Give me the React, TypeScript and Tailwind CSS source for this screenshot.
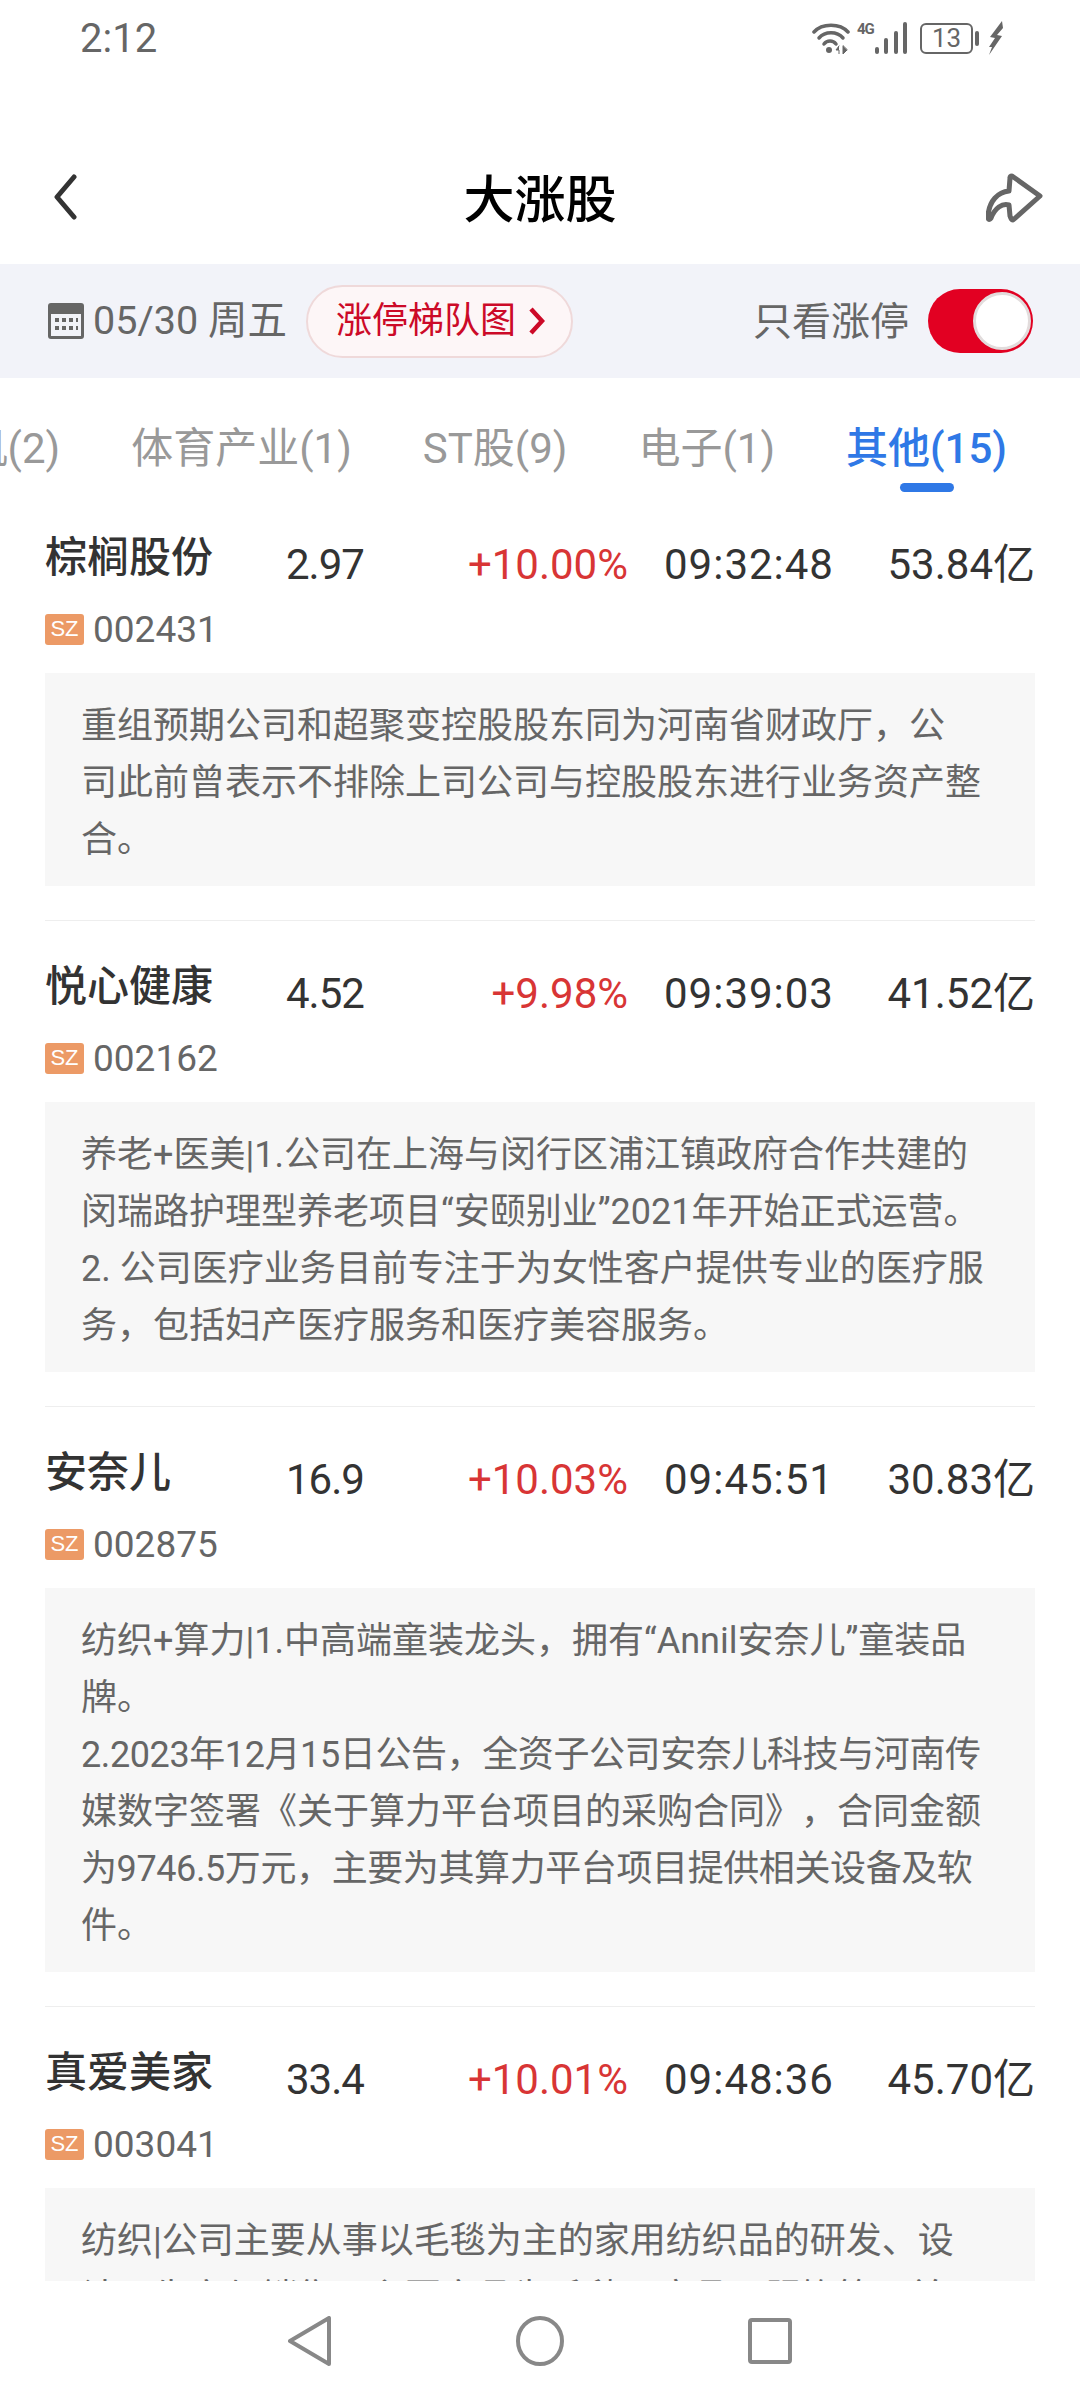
import type { FC } from "react";

const cjk = "font-['Roboto','Noto_Sans_CJK_SC',sans-serif]";

interface Stock {
  name: string;
  price: string;
  change: string;
  time: string;
  cap: string;
  code: string;
  lines: string[];
}

const stocks: Stock[] = [
  {
    name: "棕榈股份",
    price: "2.97",
    change: "+10.00%",
    time: "09:32:48",
    cap: "53.84亿",
    code: "002431",
    lines: [
      "重组预期公司和超聚变控股股东同为河南省财政厅，公",
      "司此前曾表示不排除上司公司与控股股东进行业务资产整",
      "合。",
    ],
  },
  {
    name: "悦心健康",
    price: "4.52",
    change: "+9.98%",
    time: "09:39:03",
    cap: "41.52亿",
    code: "002162",
    lines: [
      "养老+医美|1.公司在上海与闵行区浦江镇政府合作共建的",
      "闵瑞路护理型养老项目“安颐别业”2021年开始正式运营。",
      "2. 公司医疗业务目前专注于为女性客户提供专业的医疗服",
      "务，包括妇产医疗服务和医疗美容服务。",
    ],
  },
  {
    name: "安奈儿",
    price: "16.9",
    change: "+10.03%",
    time: "09:45:51",
    cap: "30.83亿",
    code: "002875",
    lines: [
      "纺织+算力|1.中高端童装龙头，拥有“Annil安奈儿”童装品",
      "牌。",
      "2.2023年12月15日公告，全资子公司安奈儿科技与河南传",
      "媒数字签署《关于算力平台项目的采购合同》，合同金额",
      "为9746.5万元，主要为其算力平台项目提供相关设备及软",
      "件。",
    ],
  },
  {
    name: "真爱美家",
    price: "33.4",
    change: "+10.01%",
    time: "09:48:36",
    cap: "45.70亿",
    code: "003041",
    lines: [
      "纺织|公司主要从事以毛毯为主的家用纺织品的研发、设",
      "计、生产与销售，主要产品为毛毯、床品、服饰等，并",
    ],
  },
];

const tabs = ["无人机(2)", "体育产业(1)", "ST股(9)", "电子(1)"];

const StatusBar: FC = () => (
  <div className="flex h-[76px] shrink-0 items-center justify-between pl-[80px] pr-[77px] text-[#666]">
    <span className="mt-[2px] text-[40px] leading-none">2:12</span>
    <div className="flex items-center">
      <svg width="38" height="32" viewBox="0 0 38 32" fill="none" stroke="#666" strokeWidth="3.5" strokeLinecap="round">
        <path d="M2 10C10 1 28 1 36 10" />
        <path d="M7 16C13 9 25 9 31 16" />
        <path d="M12 22C15 18 21 18 24 22" />
        <circle cx="17" cy="28" r="3" fill="#666" stroke="none" />
        <path d="M27 24L24 28H27V32M31 24V32L35 28Z" fill="#666" strokeWidth="1" />
      </svg>
      <div className="ml-[7px] flex h-[32px] items-end">
        <span className="mb-auto w-[18px] text-[15px] font-bold leading-[14px] tracking-[-1px]">4G</span>
        <svg width="32" height="32" viewBox="0 0 32 32" fill="#666">
          <rect x="0" y="25" width="4" height="7" rx="2" />
          <rect x="9" y="16" width="4" height="16" rx="2" />
          <rect x="19" y="9" width="4" height="23" rx="2" />
          <rect x="28" y="0" width="4" height="32" rx="2" />
        </svg>
      </div>
      <div className="ml-[13px] flex h-[31px] w-[53px] items-center justify-center rounded-[6px] border-[2px] border-[#666] text-[26px] leading-none">
        13
      </div>
      <div className="ml-[2px] h-[15px] w-[4px] rounded-[2px] bg-[#666]" />
      <svg className="ml-[9px]" width="15" height="34" viewBox="0 0 15 34" fill="#666">
        <path d="M14 0L2 16L7 17L1 26L4 26L1 34L14 15L9 14L15 7Z" />
      </svg>
    </div>
  </div>
);

const Header: FC = () => (
  <div className="flex h-[188px] shrink-0 items-center justify-between pl-[53px] pr-[37px] pt-[56px]">
    <div className="mb-[2px] w-[41px]">
      <svg width="24" height="46" viewBox="0 0 24 46" fill="none" stroke="#333" strokeWidth="5" strokeLinecap="round" strokeLinejoin="round">
        <path d="M21 3L4 23L21 43" />
      </svg>
    </div>
    <h1 className={`mt-[6px] text-[51px] font-medium leading-[64px] text-black ${cjk}`}>大涨股</h1>
    <svg width="57" height="50" viewBox="0 0 57 50" fill="none" stroke="#666" strokeWidth="5" strokeLinejoin="round" strokeLinecap="round">
      <path d="M26 3L54 23L27 47C25 47 25 45 24 43L23 32C16 30 9 35 5 45C3 48 2 46 2 43C3 28 12 19 23 18L24 5C24 3 25 3 26 3Z" />
    </svg>
  </div>
);

const FilterBar: FC = () => (
  <div className="flex h-[114px] shrink-0 items-center justify-between bg-[#f2f3f9] pl-[48px] pr-[47px]">
    <div className="flex items-center">
      <svg width="36" height="36" viewBox="0 0 36 36">
        <rect width="36" height="36" rx="3" fill="#666" />
        <rect x="3" y="11" width="30" height="22" fill="#f2f3f9" />
        <g fill="#666">
          <rect x="7" y="15" width="4" height="4" />
          <rect x="14" y="15" width="4" height="4" />
          <rect x="21" y="15" width="4" height="4" />
          <rect x="28" y="15" width="2" height="4" />
          <rect x="7" y="23" width="4" height="4" />
          <rect x="14" y="23" width="4" height="4" />
          <rect x="21" y="23" width="4" height="4" />
          <rect x="28" y="23" width="2" height="4" />
        </g>
      </svg>
      <span className={`ml-[9px] w-[213px] whitespace-nowrap text-[39.5px] leading-none text-[#666] ${cjk}`}>05/30 周五</span>
      <div className="flex h-[73px] w-[267px] items-center rounded-full border-[2px] border-[#efd9da] bg-[#fdf6f7] pl-[28px]">
        <span className={`text-[36px] leading-none text-[#cc0a28] ${cjk}`}>涨停梯队图</span>
        <svg className="ml-[12px]" width="17" height="30" viewBox="0 0 17 30" fill="none" stroke="#cc0a28" strokeWidth="4.5">
          <path d="M3 3L14 15L3 27" />
        </svg>
      </div>
    </div>
    <div className="flex items-center">
      <span className={`mt-[2px] text-[39px] leading-none text-[#666] ${cjk}`}>只看涨停</span>
      <div className="ml-[19px] flex h-[64px] w-[105px] items-center justify-end rounded-full bg-[#e20022] pr-[2px]">
        <div className="h-[58px] w-[58px] rounded-full border-[3px] border-[#e2dcdc] bg-white" />
      </div>
    </div>
  </div>
);

const Tabs: FC = () => (
  <div className="relative flex h-[114px] shrink-0 items-center justify-end overflow-hidden whitespace-nowrap pr-[73px] pt-[28px]">
    {tabs.map((t) => (
      <span key={t} className={`mr-[71px] text-[42px] leading-none text-[#999] ${cjk}`}>
        {t}
      </span>
    ))}
    <span className={`text-[42px] font-medium leading-none text-[#2f78e6] ${cjk}`}>其他(15)</span>
    <div className="absolute bottom-0 right-[126px] h-[9px] w-[54px] rounded-full bg-[#2f78e6]" />
  </div>
);

// these two lines hold many digits, which run wider in Roboto than in the app's font
const tightLines = [
  "2.2023年12月15日公告，全资子公司安奈儿科技与河南传",
  "为9746.5万元，主要为其算力平台项目提供相关设备及软",
];

const StockRow: FC<{ stock: Stock; last: boolean }> = ({ stock, last }) => (
  <div className={`mx-[45px] ${last ? "" : "mb-[37px] border-b-[1px] border-[#eee] pb-[34px]"}`}>
    <div className={`flex h-[58px] items-center text-[42px] leading-none ${cjk}`}>
      <span className="w-[241px] font-medium text-[#333]">{stock.name}</span>
      <span className="mt-[13px] w-[120px] tracking-[-1px] text-[#333]">{stock.price}</span>
      <span className="mt-[13px] w-[222px] text-right text-[#d83535]">{stock.change}</span>
      <span className="mt-[13px] ml-[36px] tracking-[1px] text-[#333]">{stock.time}</span>
      <span className="mt-[13px] flex-1 text-right text-[#333]">{stock.cap}</span>
    </div>
    <div className="mt-[26px] flex h-[32px] items-center">
      <span className="flex h-[31px] w-[39px] items-center justify-center rounded-[3px] bg-[#ec9a66] font-['Liberation_Sans',sans-serif] text-[22px] leading-none text-white">
        SZ
      </span>
      <span className="ml-[9px] font-['Roboto',sans-serif] text-[37px] leading-none text-[#666]">{stock.code}</span>
    </div>
    <div className={`mt-[28px] bg-[#f7f7f7] pb-[17px] pl-[36px] pt-[25px] text-[36px] leading-[57px] text-[#666] [text-spacing-trim:space-all] ${cjk}`}>
      {stock.lines.map((l) => (
        <div key={l} className={`whitespace-nowrap ${tightLines.includes(l) ? "tracking-[-0.4px]" : ""}`}>
          {l}
        </div>
      ))}
    </div>
  </div>
);

const NavBar: FC = () => (
  <div className="flex h-[119px] shrink-0 items-center justify-center gap-[184px] bg-white">
    <svg width="44" height="50" viewBox="0 0 44 50" fill="none" stroke="#888" strokeWidth="4" strokeLinejoin="round">
      <path d="M41 2V48L2 25Z" />
    </svg>
    <svg width="48" height="50" viewBox="0 0 48 50" fill="none" stroke="#888" strokeWidth="4">
      <ellipse cx="24" cy="25" rx="22" ry="23" />
    </svg>
    <svg width="44" height="46" viewBox="0 0 44 46" fill="none" stroke="#888" strokeWidth="4">
      <rect x="2" y="2" width="40" height="42" rx="2" />
    </svg>
  </div>
);

export default function App() {
  return (
    <div className="flex h-[2400px] w-[1080px] flex-col overflow-hidden bg-white font-['Roboto','Noto_Sans_CJK_SC',sans-serif]">
      <StatusBar />
      <Header />
      <FilterBar />
      <Tabs />
      <div className="min-h-0 flex-1 overflow-hidden pt-[37px]">
        {stocks.map((s, i) => (
          <StockRow key={s.code} stock={s} last={i === stocks.length - 1} />
        ))}
      </div>
      <NavBar />
    </div>
  );
}
